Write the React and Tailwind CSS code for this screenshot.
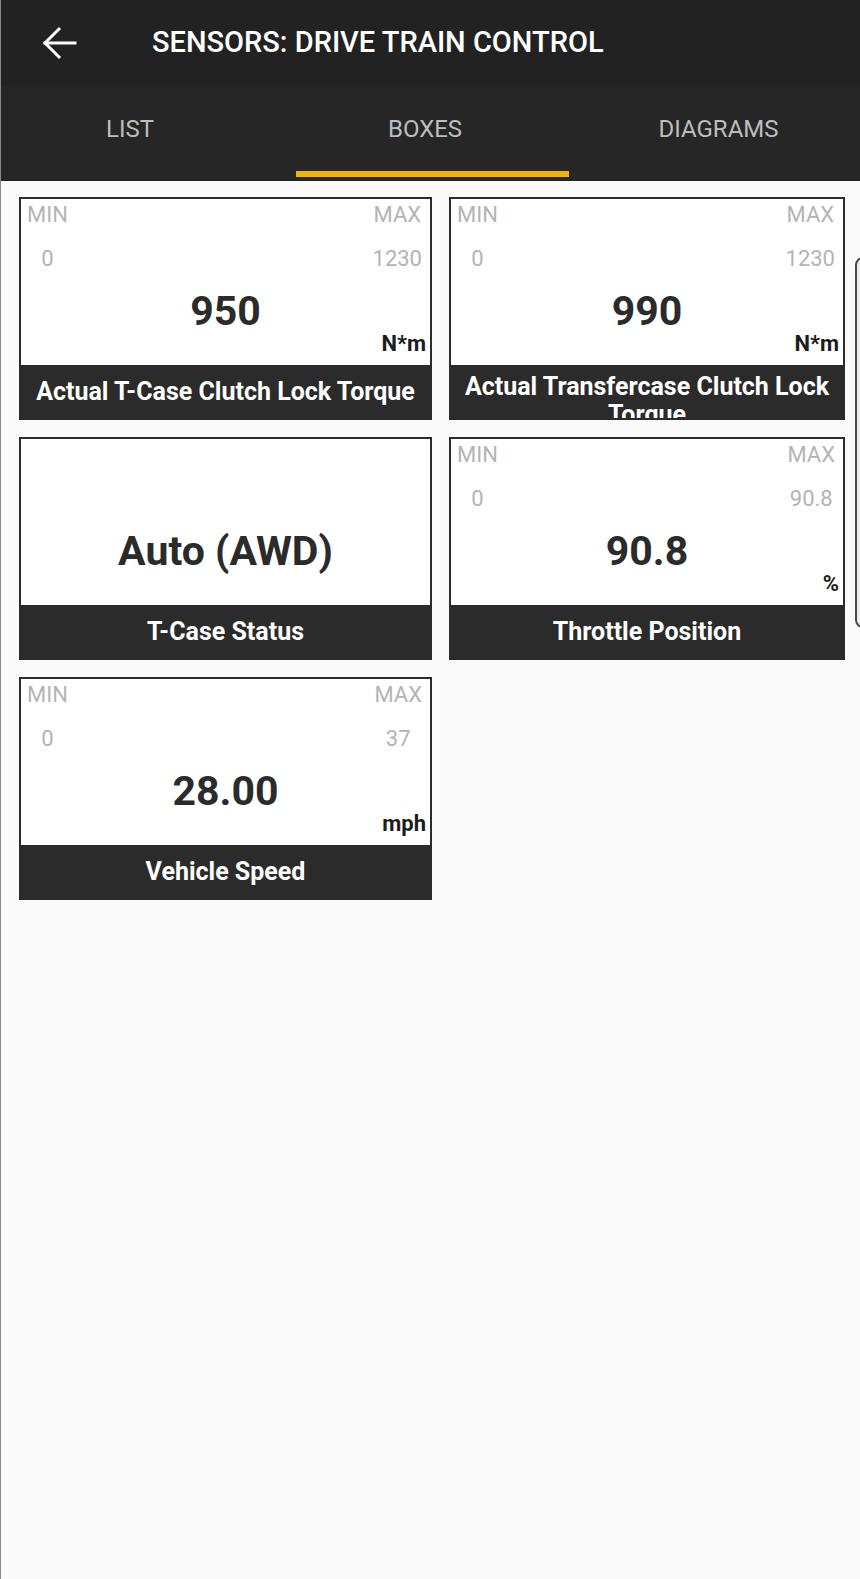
import React from "react";

const cards = [
  { label: "Actual T-Case Clutch Lock Torque", min: "0", max: "1230", value: "950", unit: "N*m" },
  { label: "Actual Transfercase Clutch Lock Torque", min: "0", max: "1230", value: "990", unit: "N*m" },
  { label: "T-Case Status", value: "Auto (AWD)", text: true },
  { label: "Throttle Position", min: "0", max: "90.8", value: "90.8", unit: "%" },
  { label: "Vehicle Speed", min: "0", max: "37", value: "28.00", unit: "mph" },
];

function SensorBox({ c }) {
  return (
    <div className="border-2 border-[#2b2b2b] bg-white">
      <div className="h-[166px] flex flex-col px-[6px] pt-[3px]">
        <div className={`flex justify-between text-[22px] leading-[26px] text-[#b4b4b4] ${c.text ? "invisible" : ""}`}>
          <div className="flex flex-col items-center gap-[18px]">
            <span>MIN</span>
            <span>{c.min || "0"}</span>
          </div>
          <div className="flex flex-col items-center gap-[18px] pr-[2px]">
            <span>MAX</span>
            <span>{c.max || "0"}</span>
          </div>
        </div>
        <div className="text-center text-[41px] leading-[40px] font-bold text-[#2b2b2b] mt-[19px]">{c.value}</div>
        <div className={`text-right text-[22px] leading-[26px] font-bold text-[#1c1c1c] -mr-[2px] ${c.text ? "invisible" : ""}`}>{c.unit || "-"}</div>
      </div>
      <div className="h-[53px] bg-[#2b2b2b] py-[8px] px-[8px] flex justify-center [align-items:safe_center] overflow-hidden">
        <p className="text-white text-[25px] leading-[28px] font-bold text-center">{c.label}</p>
      </div>
    </div>
  );
}

export default function App() {
  return (
    <div className="relative min-h-[1579px] bg-[#fafafa] border-l border-[#8a8a8a] overflow-hidden" style={{ fontFamily: "Roboto, 'Noto Sans', sans-serif" }}>
      <div className="h-[86px] bg-[#222222] flex items-center">
        <svg width="40" height="40" viewBox="0 0 40 40" className="ml-[39px]" fill="none" stroke="white" strokeWidth="3" strokeLinecap="square">
          <path d="M5 20H35" />
          <path d="M19 6L5 20L19 34" />
        </svg>
        <h1 className="ml-[72px] text-white text-[29px] font-medium">SENSORS: DRIVE TRAIN CONTROL</h1>
      </div>
      <div className="h-[95px] bg-[#262626] flex text-[24px] text-[#bdbdbd]">
        <div className="w-[258px] flex flex-col">
          <div className="h-[85px] flex items-center justify-center">LIST</div>
        </div>
        <div className="w-[332px] flex flex-col">
          <div className="h-[85px] flex items-center justify-center">BOXES</div>
          <div className="h-[6px] w-[273px] ml-[37px] bg-[#f0b400]"></div>
        </div>
        <div className="flex-1 flex flex-col pr-[14px]">
          <div className="h-[85px] flex items-center justify-center">DIAGRAMS</div>
        </div>
      </div>
      <div className="grid grid-cols-[413px_396px] gap-[17px] pl-[18px] pt-[16px]">
        {cards.map((c) => (
          <SensorBox key={c.label} c={c} />
        ))}
      </div>
      <div className="absolute left-[854px] top-[257px] w-[14px] h-[371px] border-2 border-[#4a4a4a] rounded-l-[8px] bg-[#efefef]"></div>
    </div>
  );
}
